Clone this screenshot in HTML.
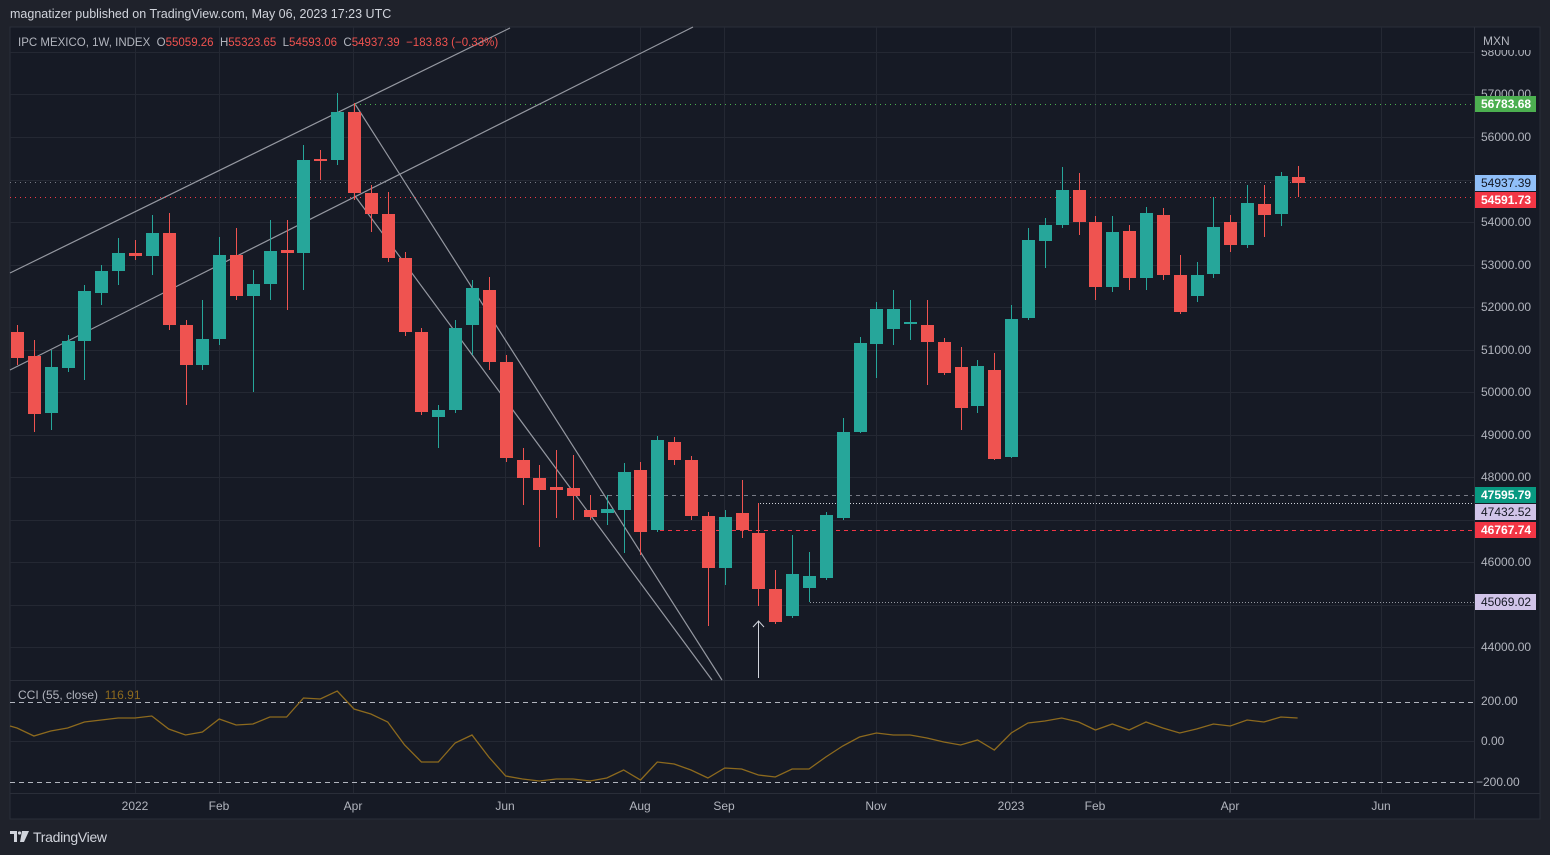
<!DOCTYPE html>
<html><head><meta charset="utf-8"><style>
body{margin:0;width:1550px;height:855px;background:#1f222b;overflow:hidden;font-family:"Liberation Sans",sans-serif;}
.hdr{position:absolute;left:10px;top:7px;font-size:12.5px;color:#d1d4dc;}
.tv{position:absolute;left:33px;top:829px;font-size:14px;color:#d1d4dc;letter-spacing:-0.3px}
svg{position:absolute;left:0;top:0;}
</style></head><body>
<div class="hdr">magnatizer published on TradingView.com, May 06, 2023 17:23 UTC</div>
<svg width="1550" height="855" id="s">
<rect x="10" y="27" width="1530" height="792" fill="#161a25" stroke="#2a2e39"/>
<g id="grid" stroke="#242833" stroke-width="1"></g>
<line x1="10" y1="680.5" x2="1474" y2="680.5" stroke="#2a2e39"/>
<line x1="10" y1="793.5" x2="1540" y2="793.5" stroke="#2a2e39"/>
<line x1="1474.5" y1="27" x2="1474.5" y2="819" stroke="#2a2e39"/>
<g id="lines" fill="none"></g>
<g id="candles"></g>
<g id="cci"></g>
<text x="18" y="46" font-size="11.5" fill="#b2b5be" xml:space="preserve">IPC MEXICO, 1W, INDEX  O<tspan fill="#f0524f">55059.26</tspan>  H<tspan fill="#f0524f">55323.65</tspan>  L<tspan fill="#f0524f">54593.06</tspan>  C<tspan fill="#f0524f">54937.39</tspan>  <tspan fill="#f0524f">−183.83 (−0.33%)</tspan></text>
<text x="18" y="699" font-size="12" fill="#b2b5be" xml:space="preserve">CCI (55, close)  <tspan fill="#8d6a1e">116.91</tspan></text>
<g font-size="12" fill="#b2b5be">
<text x="1481" y="56">58000.00</text>
<rect x="1476" y="33" width="63" height="17" fill="#161a25"/>
<text x="1483" y="45">MXN</text>
<text x="1481" y="98">57000.00</text>
<text x="1481" y="141">56000.00</text>
<text x="1481" y="226">54000.00</text>
<text x="1481" y="269">53000.00</text>
<text x="1481" y="311">52000.00</text>
<text x="1481" y="354">51000.00</text>
<text x="1481" y="396">50000.00</text>
<text x="1481" y="439">49000.00</text>
<text x="1481" y="481">48000.00</text>
<text x="1481" y="566">46000.00</text>
<text x="1481" y="651">44000.00</text>
<text x="1481" y="705">200.00</text>
<text x="1481" y="745">0.00</text>
<text x="1476" y="786">−200.00</text>
</g>
<g font-size="12" fill="#b2b5be" text-anchor="middle">
<text x="135" y="810">2022</text><text x="219" y="810">Feb</text><text x="353" y="810">Apr</text><text x="505" y="810">Jun</text><text x="640" y="810">Aug</text><text x="724" y="810">Sep</text><text x="876" y="810">Nov</text><text x="1011" y="810">2023</text><text x="1095" y="810">Feb</text><text x="1230" y="810">Apr</text><text x="1381" y="810">Jun</text>
</g>
<g font-size="12" font-weight="bold">
<rect x="1475" y="96" width="61" height="16" fill="#4caf50"/><text x="1481" y="108" fill="#fff">56783.68</text>
<rect x="1475" y="175" width="61" height="16" fill="#90bff9"/><text x="1481" y="187" fill="#131722" font-weight="normal">54937.39</text>
<rect x="1475" y="192" width="61" height="16" fill="#f23645"/><text x="1481" y="204" fill="#fff">54591.73</text>
<rect x="1475" y="487" width="61" height="16" fill="#089981"/><text x="1481" y="499" fill="#fff">47595.79</text>
<rect x="1475" y="504" width="61" height="16" fill="#d1c4e9"/><text x="1481" y="516" fill="#131722" font-weight="normal">47432.52</text>
<rect x="1475" y="522" width="61" height="16" fill="#f23645"/><text x="1481" y="534" fill="#fff">46767.74</text>
<rect x="1475" y="594" width="61" height="16" fill="#d1c4e9"/><text x="1481" y="606" fill="#131722" font-weight="normal">45069.02</text>
</g>
<g fill="#d1d4dc">
<path d="M10 831 H17 V842 H14 V834 H10 Z"/>
<circle cx="19.5" cy="833" r="1.6"/>
<path d="M22 831 H29 L24 842 H20 Z"/>
</g>
</svg>
<div class="tv">TradingView</div>
<script>
var NS="http://www.w3.org/2000/svg";
function el(p,t,a){var e=document.createElementNS(NS,t);for(var k in a)e.setAttribute(k,a[k]);document.getElementById(p).appendChild(e);return e;}
[52,94,137,180,222,265,307,350,392,435,477,520,562,605,647,741].forEach(function(y){el('grid','line',{x1:10,x2:1474,y1:y+.5,y2:y+.5});});
[135,219,353,505,640,724,876,1011,1095,1230,1381].forEach(function(x){el('grid','line',{x1:x+.5,x2:x+.5,y1:27,y2:793});});
var L=[[10,273,510,28,'#9598a1'],[10,370,693,27,'#9598a1'],[355,104,722,680,'#9598a1'],[355,196,712,680,'#9598a1']];
L.forEach(function(l){el('lines','line',{x1:l[0],y1:l[1],x2:l[2],y2:l[3],stroke:l[4],'stroke-width':1.2});});
var H=[[355,104,'#4caf50','1 4'],[10,182,'#787b86','1 4'],[10,197,'#f23645','1 4'],[600,495,'#787b86','4 4'],[760,503,'#d1d4dc','1 2'],[660,530,'#f23645','4 4'],[810,602,'#9598a1','1 2']];
H.forEach(function(h){el('lines','line',{x1:h[0],y1:h[1]+.5,x2:1474,y2:h[1]+.5,stroke:h[2],'stroke-dasharray':h[3]});});
el('lines','line',{x1:10,y1:702.5,x2:1474,y2:702.5,stroke:'#b2b5be','stroke-dasharray':'5 4'});
el('lines','line',{x1:10,y1:782.5,x2:1474,y2:782.5,stroke:'#b2b5be','stroke-dasharray':'5 4'});
el('lines','line',{x1:758.5,y1:678,x2:758.5,y2:621,stroke:'#d1d4dc'});
el('lines','path',{d:'M753 627 L758.5 621 L764 627',stroke:'#d1d4dc'});
var C="r332358325365 r356414340432 g367413350430 g341368335372 g291341285380 g271293265305 g253271238285 r253256240260 g233256215275 r233325213330 r325365320405 g339365300370 g255339237345 r255296228300 g284296270392 g251284220300 r250253220310 g160253145290 r159161150180 g112160093165 r112193103200 r193214185232 r214258192262 r258332252336 r332412328415 g410417405448 g328410320413 g288325280355 r290362277370 r362458355462 r460478448505 r478490465547 r487490450518 r488496455520 r510517495520 g509513495525 g472510463553 r470532462555 g440530436532 r442460437465 r460516456520 r516568512626 g517568510585 r513530480538 r533589503606 r589622570624 g574616535618 g576588552602 g515578512580 g432518418520 g343432337433 g309344302378 g309329290345 g322324300340 r325342300385 r342373338375 r367408347430 g366406360413 r370459353460 g319457305458 g240318228320 g225241218268 g190225167228 r190222173235 r222287216300 g232287216292 r231278225290 g213278207290 r215275208280 r275312255314 g275296262302 g227274197278 r222245215252 g203245185248 r204215185237 g176214172226 r177183166197".split(' ');
C.forEach(function(c,i){var x=Math.round(17+i*16.85);var col=c[0]=='g'?'#26a69a':'#ef5350';
var t=+c.substr(1,3),b=+c.substr(4,3),h=+c.substr(7,3),l=+c.substr(10,3);
el('candles','rect',{x:x,y:h,width:1,height:l-h,fill:col});
el('candles','rect',{x:x-6,y:t,width:13,height:Math.max(2,b-t),fill:col});});
var P=[728,736,731,728,722,720,718,718,716,729,735,732,719,725,724,717,717,698,699,691,709,714,722,745,762,762,743,735,757,776,779,781,779,779,781,778,770,780,762,764,770,778,768,769,775,777,769,769,757,746,737,733,735,735,738,742,745,740,750,733,723,721,718,722,730,724,730,722,728,733,729,724,726,720,722,717,718];
var pts="10,726 "+P.map(function(y,i){return (17+i*16.85).toFixed(1)+","+y;}).join(' ');
el('cci','polyline',{points:pts,fill:'none',stroke:'#8d6a1e','stroke-width':1.3});
</script>
</body></html>
